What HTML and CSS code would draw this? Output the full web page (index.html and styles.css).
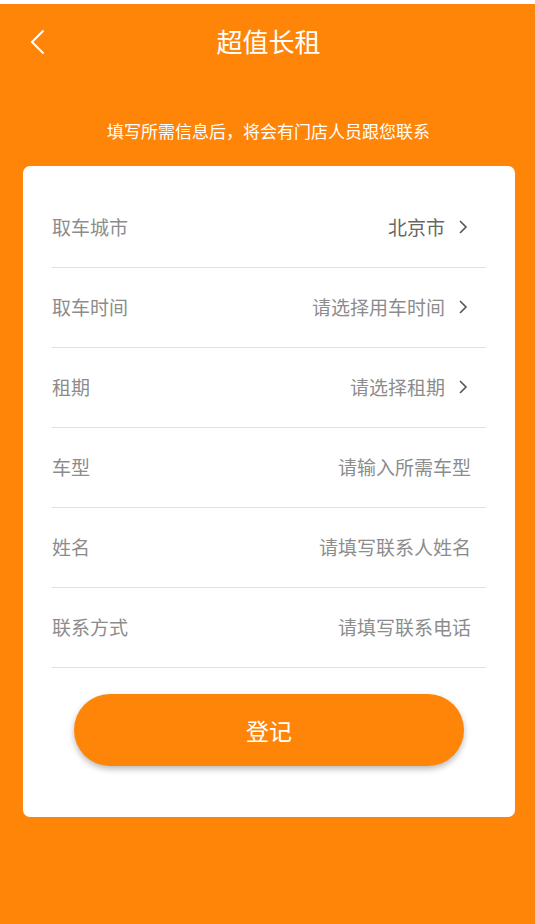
FILE: index.html
```html
<!DOCTYPE html>
<html lang="zh-CN">
<head>
<meta charset="utf-8">
<title>超值长租</title>
<link rel="stylesheet" href="styles.css">
</head>
<body>
<div class="statusbar"></div>
<header class="header">
  <span class="back">
    <svg width="16" height="26" viewBox="0 0 16 26"><path d="M13.5 1.5 L2 13 L13.5 24.5" fill="none" stroke="#fff" stroke-width="2"/></svg>
  </span>
  <h1 class="title">超值长租</h1>
  <span class="spacer"></span>
</header>
<p class="subtitle">填写所需信息后，将会有门店人员跟您联系</p>
<main class="card">
  <div class="row">
    <span class="label">取车城市</span>
    <span class="value value-set">北京市<svg class="chev" width="14" height="14" viewBox="0 0 14 14"><path d="M3 1 L9 7 L3 13" fill="none" stroke="#555" stroke-width="1.6"/></svg></span>
  </div>
  <div class="row">
    <span class="label">取车时间</span>
    <span class="value">请选择用车时间<svg class="chev" width="14" height="14" viewBox="0 0 14 14"><path d="M3 1 L9 7 L3 13" fill="none" stroke="#555" stroke-width="1.6"/></svg></span>
  </div>
  <div class="row">
    <span class="label">租期</span>
    <span class="value">请选择租期<svg class="chev" width="14" height="14" viewBox="0 0 14 14"><path d="M3 1 L9 7 L3 13" fill="none" stroke="#555" stroke-width="1.6"/></svg></span>
  </div>
  <div class="row">
    <span class="label">车型</span>
    <span class="value">请输入所需车型</span>
  </div>
  <div class="row">
    <span class="label">姓名</span>
    <span class="value">请填写联系人姓名</span>
  </div>
  <div class="row">
    <span class="label">联系方式</span>
    <span class="value">请填写联系电话</span>
  </div>
  <button class="submit">登记</button>
</main>
</body>
</html>
```
FILE: styles.css
```css
* { box-sizing: border-box; }
html, body { margin: 0; padding: 0; }
body {
  background: #ff8509;
  min-height: 924px;
  font-family: "Noto Sans CJK SC", "Noto Sans", sans-serif;
  color: #fff;
}
.statusbar { height: 4px; background: #fff; }
.header {
  height: 74px;
  display: grid;
  grid-template-columns: 60px 1fr 60px;
  align-items: center;
}
.back {
  display: flex;
  align-items: center;
  padding-left: 30px;
  padding-top: 2px;
}
.back svg { display: block; }
.title {
  margin: 0;
  text-align: center;
  font-size: 26px;
  font-weight: 400;
  line-height: 34px;
  padding-left: 2px;
}
.subtitle {
  margin: 41px 0 0;
  text-align: center;
  font-size: 17px;
  line-height: 24px;
  padding-left: 2px;
}
.card {
  display: block;
  margin: 23px 0 0 23px;
  width: 492px;
  background: #fff;
  border-radius: 7px;
  padding: 22px 29px 51px;
}
.row {
  height: 80px;
  border-bottom: 1px solid #e0e0e0;
  display: flex;
  align-items: center;
  justify-content: space-between;
  font-size: 19px;
  color: #8c8c8c;
  padding-bottom: 1px;
}
.label { line-height: 28px; }
.value {
  display: flex;
  align-items: center;
  line-height: 28px;
  padding-right: 15px;
}
.value-set { color: #666; }
.chev { display: block; margin-left: 12px; }
.submit {
  display: block;
  margin: 26px 22px 0;
  width: 390px;
  height: 72px;
  border: none;
  border-radius: 36px;
  background: #ff8509;
  color: #fff;
  font-family: "Noto Sans CJK SC", "Noto Sans", sans-serif;
  font-size: 23px;
  box-shadow: 0 3px 6px rgba(0, 0, 0, 0.28);
}
```
